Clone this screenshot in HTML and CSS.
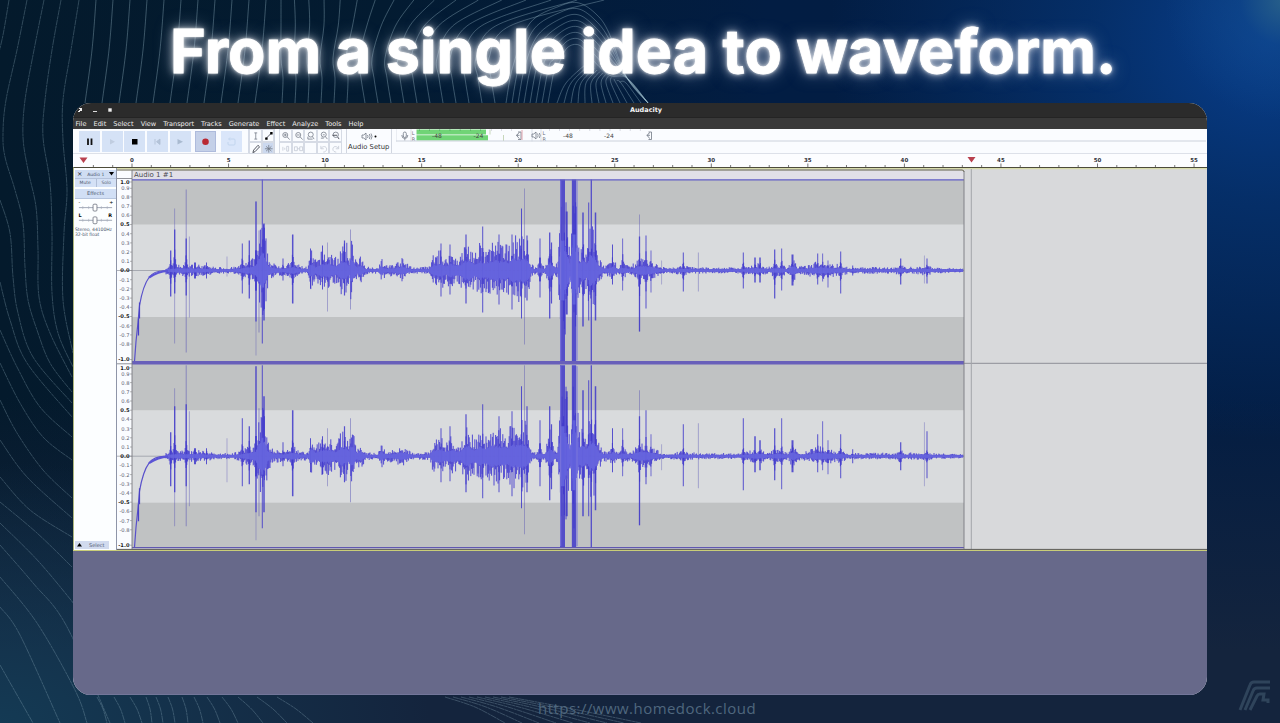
FILE: index.html
```html
<!DOCTYPE html>
<html lang="en">
<head>
<meta charset="utf-8">
<title>Audacity</title>
<link rel="stylesheet" href="styles.css">
</head>
<body>
<svg class="contours" viewBox="0 0 1280 723" id="contours" aria-hidden="true"></svg>
<main class="page">
  <h1 class="headline">From a single idea to waveform.</h1>
  <section class="window">
    <div class="titlebar">
      <div class="controls"><span class="close"></span><span class="min"></span><span class="max"></span></div>
      <span class="app">Audacity</span>
    </div>
    <nav class="menu"><span>File</span><span>Edit</span><span>Select</span><span>View</span><span>Transport</span><span>Tracks</span><span>Generate</span><span>Effect</span><span>Analyze</span><span>Tools</span><span>Help</span></nav>
    <div class="toolbar">
      <div class="transport">
        <div class="btn"><svg viewBox="0 0 21 21"><path d="M9 7.500v6.500M12.500 7.500v6.500" stroke="#111" stroke-width="1.800"/></svg></div>
        <div class="btn"><svg viewBox="0 0 21 21"><path d="M8 8l5 2.700-5 2.800z" fill="#c0cde0"/></svg></div>
        <div class="btn"><svg viewBox="0 0 21 21"><path d="M8 8h5.500v5.500H8z"/></svg></div>
        <div class="btn"><svg viewBox="0 0 21 21"><path d="M8 8v5.500M13 8l-3.500 2.700 3.500 2.800z" fill="#b4c4d9" stroke="#afbed3" stroke-width=".8"/></svg></div>
        <div class="btn"><svg viewBox="0 0 21 21"><path d="M7.500 8l5.500 2.700-5.500 2.800z" fill="#a9bad0"/></svg></div>
        <div class="btn rec"><svg viewBox="0 0 21 21"><circle cx="10.500" cy="10.800" r="3.300" fill="#b92832"/></svg></div>
        <div class="btn loop"><svg viewBox="0 0 21 21"><path d="M8 8h5q1 0 1 1v4q0 1-1 1H8M9 6.500L7.500 8 9 9.500M7 11v2q0 1 1 1" fill="none" stroke="#bdd0eb" stroke-width=".8"/></svg></div>
      </div>
      <div class="tools">
        <i><svg viewBox="0 0 12 12"><path d="M4.500 3h3M4.500 9.500h3M6 3v6.500" class="st"/></svg></i>
        <i><svg viewBox="0 0 12 12"><path d="M3 9l6-6" class="dk"/><path d="M2.300 7.700h2.500v2.500H2.300zM7.500 2.200H10v2.500H7.500z"/></svg></i>
        <i><svg viewBox="0 0 12 12"><path d="M3 10l.8-2.600 4.500-5L10 4 5.300 9z" class="dk"/></svg></i>
        <i class="on"><svg viewBox="0 0 12 12"><path d="M6 2v8M2 6h8M3.200 3.500l5.600 5M8.800 3.500l-5.600 5" class="st"/></svg></i>
      </div>
      <div class="zooms">
        <i><svg viewBox="0 0 12 12"><circle cx="5.500" cy="5.200" r="2.600" class="st"/><path d="M7.500 7.200L10 10M4 5.200h3M5.500 3.700v3" class="st"/></svg></i>
        <i><svg viewBox="0 0 12 12"><circle cx="5.500" cy="5.200" r="2.600" class="st"/><path d="M7.500 7.200L10 10M4 5.200h3" class="st"/></svg></i>
        <i><svg viewBox="0 0 12 12"><circle cx="6" cy="4.800" r="2.600" class="st"/><path d="M7.800 7l1.700 2.500M3 7v2.500h5" class="st"/></svg></i>
        <i><svg viewBox="0 0 12 12"><circle cx="6" cy="4.800" r="2.600" class="st"/><path d="M7.800 7l2 2.500M3 8.500h3M5 5h2" class="st"/></svg></i>
        <i><svg viewBox="0 0 12 12"><circle cx="6" cy="5" r="2.800" class="st"/><path d="M8 7.200l1.500 2.300M2.500 5.500h5" class="dk"/></svg></i>
        <i><svg viewBox="0 0 12 12"><path d="M3 4v4M5 5v2M7 3.500h2v5H7z" class="lt"/></svg></i>
        <i><svg viewBox="0 0 12 12"><path d="M1.500 4h3v4h-3zM7 4h3v4H7zM4.500 6H7" class="lt"/></svg></i>
        <i class="blank"></i>
        <i><svg viewBox="0 0 12 12"><path d="M3 3v3h3M3.200 5.500C5 3 9 3 9 6.500c0 2-2 3-3.500 3" class="lt"/></svg></i>
        <i><svg viewBox="0 0 12 12"><path d="M9 3v3H6M8.800 5.500C7 3 3 3 3 6.500c0 2 2 3 3.500 3" class="lt"/></svg></i>
      </div>
      <div class="setup"><svg viewBox="0 0 16 9"><path d="M1 3h1.800L5 1v7L2.800 6H1zM6.500 3q1 1.500 0 3M8.300 2q1.600 2.500 0 5M10 1.500q2 3 0 6" class="st"/><circle cx="14.500" cy="4.500" r="1" /></svg><span>Audio Setup</span></div>
      <div class="meters">
        <svg viewBox="0 0 810 12.500" width="810" height="12.500">
          <path d="M0 0V12.500M15 0v12.500M136 0v12.500M145 0v12.500" stroke="#d9dee7"/>
          <rect x="7.300" y="3" width="3" height="5.500" rx="1.500" class="st"/><path d="M5.800 6q0 3.500 3 3.500t3-3.500M8.800 9.500v2" class="st"/>
          <text x="15.700" y="5.800" class="lr">L</text><text x="15.700" y="11.600" class="lr">R</text>
          <path d="M20.500 .5h69.500v5h-69.500zM20.500 6.300h71.500v5.200h-71.500z" fill="#70d476"/>
          <path d="M23 1h66" stroke="#3f8350" stroke-dasharray=".7 9.500"/>
          <path d="M94 .5v5M107.500 6v6" stroke="#c7d7bb"/>
          <text x="36" y="8.600" class="db">-48</text><text x="77.500" y="8.600" class="db">-24</text>
          <path d="M95 1h24M153 1h95" stroke="#aab" stroke-dasharray=".8 9.300"/>
          <path d="M123.500 3.500q-5 2.800 0 6M120 6.300h3.500M122 3h3v7.500h-3" class="st"/><path d="M126 1v10" stroke="#dfa3ad"/>
          <path d="M136 5h1.800l2.200-2v7l-2.200-2H136zM141.600 4.500q1 2 0 4M143.400 4q1.500 2.500 0 5" class="st"/>
          <text x="146.500" y="5.800" class="lr">L</text><text x="146.500" y="11.600" class="lr">R</text>
          <text x="167" y="8.600" class="db">-48</text><text x="208" y="8.600" class="db">-24</text>
          <path d="M254 3.500q-5 2.800 0 6M250.500 6.300h3.500M252.500 3h3v7.500h-3" class="st"/>
          <path d="M0 12h810" stroke="#ccd2dc"/>
        </svg>
      </div>
    </div>
    <svg class="ruler" id="ruler" viewBox="73 154 1134 13" width="1134" height="13"></svg>
    <div class="project">
      <aside class="panel">
        <div class="name"><b>×</b><span>Audio 1</span><svg viewBox="0 0 6 4"><path d="M0 0h6L3 4z"/></svg></div>
        <div class="pair"><span>Mute</span><span>Solo</span></div>
        <div class="fx">Effects</div>
        <svg class="sliders" viewBox="0 0 42 27"><path d="M4 8.500h34M4 21.500h34" stroke="#8991a4" stroke-width=".8"/><path d="M8 7v3M14 7v3M27 7v3M33 7v3M8 20v3M14 20v3M27 20v3M33 20v3" stroke="#a4abb8" stroke-width=".6"/><rect x="18.500" y="5" width="4" height="7" rx="1" fill="#fff" stroke="#686e7a" stroke-width=".8"/><rect x="18.500" y="18" width="4" height="7" rx="1" fill="#fff" stroke="#686e7a" stroke-width=".8"/><text x="3.500" y="5">-</text><text x="35" y="5">+</text><text x="3.500" y="18" font-weight="bold">L</text><text x="34" y="18" font-weight="bold">R</text></svg>
        <p>Stereo, 44100Hz<br>32-bit float</p>
        <div class="select"><svg viewBox="0 0 6 4"><path d="M0 4h6L3 0z"/></svg><span>Select</span></div>
      </aside>
      <svg class="wave" id="wave" viewBox="117 168 1090 382" width="1090" height="382"></svg>
    </div>
    <div class="empty"></div>
  </section>
  <footer class="url">https://www.homedock.cloud</footer>
</main>
<svg class="brand" viewBox="0 0 34 32"><path d="M2 30L12 5q1-3 4-3h16M7 30l8-19q1-3 4-3h13M12 30l7-14q1-2 3-2h4l-1 6h5v3" fill="none" stroke="#2f445b" stroke-width="3"/></svg>
<script src="app.js"></script>
</body>
</html>
```
FILE: styles.css
```css
* { box-sizing: border-box; }
body {
  margin: 0;
  width: 1280px;
  height: 723px;
  overflow: hidden;
  position: relative;
  font-family: "DejaVu Sans", sans-serif;
  background:
    radial-gradient(circle at 1285px 0, #28608a 0, rgba(20, 77, 142, .45) 45px, transparent 120px),
    radial-gradient(ellipse 440px 400px at 1270px 40px, #083e8c 0, rgba(6, 54, 120, .7) 40%, transparent 100%),
    radial-gradient(ellipse 430px 260px at 0 723px, #143a54 0, transparent 100%),
    linear-gradient(180deg, transparent 55%, #14243d 90%),
    linear-gradient(90deg, #041a2c 0, #031b31 30%, #021d43 60%, #031d43 100%);
}
.contours { position: absolute; inset: 0; width: 1280px; height: 723px; }
.contours path { fill: none; stroke: #9cbdcb; stroke-width: .8; opacity: .36; }
.contours .dots path { stroke-dasharray: 6 .5 3 .4; }
.contours .bright path { opacity: .46; }
.page { position: relative; height: 723px; display: flex; flex-direction: column; }
.headline {
  margin: 0;
  height: 103px;
  flex: none;
  padding-left: 170px;
  font: 700 61px/102px Inter, sans-serif;
  letter-spacing: .05px;
  white-space: nowrap;
  color: #fff;
  -webkit-text-stroke: .8px #fff;
  text-shadow: 0 0 3px #fff, 0 0 8px rgba(255, 255, 255, .75), 0 0 18px rgba(220, 230, 255, .5);
}
.window { width: 1134px; height: 592px; margin-left: 73px; flex: none; display: flex; flex-direction: column; border-radius: 18px; overflow: hidden; background: #fafcff; }
.titlebar { height: 15px; flex: none; background: #2b2b2b; color: #f4f4f4; display: grid; grid-template-columns: 80px 1fr 68px; align-items: center; border-bottom: 1px solid #242424; }
.controls { display: flex; align-items: center; gap: 11px; padding-left: 5px; }
.controls span { width: 4px; height: 4px; }
.close { background: linear-gradient(135deg, transparent 40%, #eee 42% 65%, transparent 67%), linear-gradient(45deg, transparent 50%, #eee 51%); }
.min { border-bottom: 1px solid #ddd; }
.max { background: #eee; transform: scale(.85); }
.app { text-align: center; font-size: 6.500px; font-weight: 700; line-height: 13px; }
.menu { height: 11px; flex: none; display: flex; gap: 7.100px; padding-left: 2.500px; background: #393939; color: #ededed; font-size: 6.550px; line-height: 12px; white-space: nowrap; }
.toolbar { height: 25px; flex: none; display: flex; border-bottom: 1px solid #dde1e9; background: #fafcff; }
.transport { display: flex; gap: 1.700px; padding: 2px 2px 2px 6px; width: 176px; border-right: 1px solid #d4dae6; }
.btn { width: 21px; height: 21px; background: #d5e2f6; flex: none; }
.btn svg { display: block; width: 21px; height: 21px; }
.rec { margin-left: 3px; background: #c4d0e8; border: 1px solid #aebbdc; }
.rec svg { margin: -1px; }
.loop { margin-left: 3px; background: #dae6fa; }
.tools, .zooms { display: grid; grid-template-rows: 12.500px 12.500px; height: 25px; }
.tools { grid-template-columns: 12.500px 12.500px; border-right: 1px solid #cfd5e1; }
.zooms { grid-template-columns: repeat(5, 12.500px); margin-left: 4px; }
.tools i, .zooms i { border: .5px solid #d6dbe5; height: 12.500px; }
.tools svg, .zooms svg { display: block; width: 11.500px; height: 11.500px; }
.tools .on { background: #ccd9ef; }
.st { fill: none; stroke: #707784; stroke-width: .8; }
.dk { fill: none; stroke: #3b3f49; stroke-width: .9; }
.lt { fill: none; stroke: #c1c7d3; stroke-width: .8; }
.setup { margin-left: 4px; width: 46.500px; display: flex; flex-direction: column; align-items: center; border: 1px solid #d1d6e0; border-width: 0 1px; font-size: 6.800px; line-height: 9px; color: #333; white-space: nowrap; }
.setup svg { width: 16px; height: 9px; margin: 3px 0 2px; }
.meters { padding: 0 0 0 3.500px; height: 13px; }
.meters svg { display: block; }
.lr { font-size: 5px; fill: #6b717b; }
.db { font-size: 6px; fill: #444; }
.ruler { display: block; flex: none; background: #fcfdff; }
.ruler text { font-size: 5.500px; font-weight: 700; text-anchor: middle; fill: #30323a; }
.project { display: flex; height: 383px; flex: none; border-left: 1px solid #aeb77e; border-top: 1px solid #4c4b3a; }
.panel { width: 43px; padding: 2px 0 1px 1px; border-right: 1px solid #8e95a8; background: #fcfeff; display: flex; flex-direction: column; color: #4e596e; font-size: 4.500px; }
.name { height: 8px; display: flex; align-items: center; justify-content: space-between; padding: 0 2px; background: #cfddf3; color: #48536a; }
.name b { font-size: 6.500px; line-height: 8px; color: #222; font-weight: 400; }
.name svg, .select svg { width: 5px; height: 3.500px; }
.pair { height: 9px; display: grid; grid-template-columns: 1fr 1fr; text-align: center; line-height: 8px; background: #d4e1f6; border-top: .5px solid #b5c3dc; }
.pair span + span { border-left: 1px solid #b1bfd8; }
.fx { margin-top: 1.500px; height: 10px; background: #d1dff5; line-height: 9.500px; text-align: center; border-bottom: 1px solid #b6c5de; font-size: 5px; }
.sliders { display: block; width: 41px; height: 27px; margin-top: 0; }
.sliders text { font-size: 5px; }
.panel p { margin: 0; line-height: 5.600px; font-size: 4.600px; white-space: nowrap; letter-spacing: -.1px; padding-top: 1px; }
.select { margin-top: auto; display: flex; align-items: center; gap: 7px; width: 34px; height: 8px; padding-left: 2px; background: #d1daee; font-size: 5px; }
.wave { display: block; width: 1090px; height: 382px; }
.wave text { font-size: 5.200px; text-anchor: end; fill: #5a6070; }
.wave .major { font-weight: 700; fill: #222; }
.wave .clip { font-size: 7px; text-anchor: start; fill: #4b4b51; }
.empty { flex: 1; background: #67698a; border-top: 1px solid #c9cd78; border-bottom: 1px solid #73769a; }
.url { height: 28px; padding: 1px 0 0 538px; font: 400 15px/25px "Open Sans", sans-serif; color: #4f677e; letter-spacing: .46px; }
.brand { position: absolute; left: 1238px; top: 680px; width: 34px; height: 32px; }
```
FILE: app.js
```js
// Small seeded generator, so the drawing is stable between loads.
let seed = 7;
const rnd = () => { seed = (seed * 16807) % 2147483647; return seed / 2147483647; };

// ---- background contour lines ----
const curve = pts => {
  let d = `M${pts[0]}`;
  for (let i = 0; i < pts.length - 1; i++) {
    const a = pts[i - 1] || pts[i], b = pts[i], c = pts[i + 1], e = pts[i + 2] || c;
    d += `C${b[0] + (c[0] - a[0]) / 6} ${b[1] + (c[1] - a[1]) / 6} ${c[0] - (e[0] - b[0]) / 6} ${c[1] - (e[1] - b[1]) / 6} ${c[0]} ${c[1]}`;
  }
  return `<path d="${d}"/>`;
};
const left = [
  [[9,0],[3,35],[-3,60]],
  [[27,0],[17,50],[6,100],[3,133],[5,157],[15,190],[23,223],[25,267],[28,300],[37,330],[50,363],[72,392]],
  [[44,0],[34,50],[25,100],[23,137],[28,170],[36,207],[38,250],[39,297],[50,333],[72,377]],
  [[61,0],[52,50],[45,100],[43,137],[50,183],[52,233],[52,293],[58,333],[73,367]],
  [[79,0],[71,50],[63,100],[63,140],[67,190],[64,233],[63,300],[73,353]],
  [[0,200],[10,233],[13,277],[18,313],[33,357],[72,403]],
  [[0,282],[10,320],[27,363],[72,417]],
  [[0,330],[17,367],[40,407],[72,437]],
  [[0,363],[20,403],[43,437],[72,460]],
  [[0,400],[17,433],[43,470],[72,498]],
  [[0,440],[27,477],[72,518]],
  [[0,477],[30,510],[72,537]],
  [[0,502],[37,533],[72,567]],
  [[0,523],[40,563],[83,615]],
  [[0,545],[33,583],[66,625],[110,723]],
  [[0,577],[37,623],[75,690],[87,723]],
  [[0,607],[20,635],[60,723]],
  [[0,665],[33,723]]
];
let lines = left.map(curve).join("");
[[97,107],[114,125],[130,142],[146,152],[156,163],[168,175],[182,188],[194,203],[207,220],[222,238],[238,263],[257,287],[277,313]].forEach(p => {
  lines += curve([[p[0],697],[(p[0] + p[1]) / 2 + 1,709],[p[1],723]]);
});
for (let i = 0; i < 9; i++) lines += curve([[445 + i * 8,697],[475 + i * 11,707],[505 + i * 17,723]]);
let bright = "";
for (let i = 0; i < 11; i++) { const x = 96 + i * 17; bright += curve([[x,0],[x - 4,50],[x - 11,103]]); }
for (let i = 0; i < 17; i++) {
  const x = 281 + i * 13;
  bright += curve([[x + i * i * .45,0],[x + i * 1.300,26],[x,58],[x + 2,78],[x + (i > 5 ? 6 : 1),103]]);
}
for (let i = 0; i < 8; i++) {
  const y = 3 + i * 6;
  bright += curve([[506 + i * 6,103],[513 + i * 6,66],[530 + i * 4,y + 20],[560 + i,y + 3],[579,y],[597 - i,y + 12],[609,y + 30],[627,78],[648,103]]);
}
for (let i = 0; i < 13; i++) bright += curve([[557 + i * 7,103],[566 + i * 5,83],[586 + i * 2.800,64 + i * 1.500]]);
document.getElementById("contours").innerHTML = `<g class="dots">${lines}</g><g class="bright">${bright}</g>`;

// ---- timeline ruler ----
const second = 19.31, origin = 132;
let r = "";
for (let s = -2; s <= 55; s++) {
  const x = origin + s * second;
  r += `<path d="M${x} ${s % 5 ? 165 : 163.500}V167" stroke="#777"/>`;
  if (s >= 0 && s % 5 === 0) r += `<text x="${x}" y="162.300">${s}</text>`;
}
r += `<path d="M79.500 157.500h8l-4 5.500zM967.500 157h8l-4 5.500z" fill="#b9414e"/>`;
document.getElementById("ruler").innerHTML = r;

// ---- waveform ----
// Noise floor: x, half height.
const floor = [[165,4],[180,6],[200,6],[215,3.500],[230,3],[240,5],[250,10],[256,15],[259,36],[263,54],[265,40],[268,15],[273,7],[285,5],[293,10],[300,5],[308,4],[311,20],[316,10],[322,19],[330,19],[337,12],[341,25],[347,26],[349,12],[351,33],[354,24],[357,8],[360,14],[366,4],[378,3],[381,13],[386,5],[395,7],[402,12],[408,6],[413,3],[430,4],[433,16],[441,20],[446,12],[450,19],[460,14],[466,29],[470,27],[475,17],[480,27],[485,20],[492,30],[500,27],[508,25],[513,33],[518,33],[524,36],[528,28],[531,7],[536,3],[540,8],[545,4],[550,25],[554,7],[558,9],[561,70],[566,65],[570,18],[573,75],[577,60],[579,22],[583,32],[587,20],[590,44],[595,40],[598,14],[604,5],[610,7],[613,12],[618,4],[623,8],[630,4],[637,10],[641,13],[648,12],[653,9],[660,4],[668,2.500],[683,5],[690,4],[705,3],[740,3],[755,7],[761,7],[768,3],[775,7],[783,6],[788,3],[793,13],[798,4],[808,5],[818,10],[825,9],[835,6],[841,7],[848,3],[870,3.500],[895,3],[901,7],[905,3],[927,5],[935,3],[963,2]];
// Peaks: x, up, down, width, up/down in the lower channel, faint flag.
const peaks = [
  [170.700,20,26,1.300,24,30],[174.700,41,23,1.300,50,36],[174.700,62,73,.8,68,70,1],[186.200,32,25,1.300,52,30],[186.200,81,82,1,91,70,1],[189.300,34,47,.8,45,50,1],[195,8,8,2,8,8],[206.500,8,8,1,8,8],[227,14,6,.7,18,26,1],
  [242.300,27,23,1,38,30],[249.300,30,28,1.300,30,28],[256,69,51,1.300,90,56],[256,69,85,.7,90,84,1],[259,40,62,1,48,60,1],[262.300,91,73,1,91,72],[264,47,50,1.500,60,56],[283,12,10,1,14,10],[292.700,36,33,1.500,46,40],
  [310.500,22,18,1,18,16],[322.500,25,19,1,20,18],[327.500,28,41,.8,28,30,1],[344.500,30,25,1.200,30,26],[350.500,41,39,.9,38,46,1],
  [441,27,26,1,28,26],[450,26,24,1,30,25],[466,36,33,1.200,42,36],[482.700,44,42,1,52,42],[499,36,34,1,40,36],[512,36,39,1,45,40],[521.500,62,48,1,70,52],[524.500,82,74,.8,91,78,1],[527,35,30,1.200,50,36],
  [540,32,27,1,36,30],[549.700,38,48,1.300,50,44],[551.500,28,33,1.200,32,33],[562.500,91,91,5,91,91],[566.700,59,44,2,65,60],[574,91,91,4.300,91,91],[583,58,56,1.500,66,60],[588.700,68,50,1,76,60],[591.300,91,91,1.300,91,91],[595.500,58,50,1.500,70,54],
  [612.500,26,14,1,28,16],[622.700,32,20,.8,28,20],[639.500,34,61,1.300,40,69],[639.500,56,61,.8,66,69,1],[646,35,38,1,46,28],[651,20,22,.8,22,20],[661.700,10,14,.7,12,14,1],[683.300,18,21,1,32,30],[698.300,18,21,.8,33,32,1],
  [743.300,18,18,1,38,34],[755,13,12,1.500,20,16],[760,13,12,1.500,16,14],[774.700,21,28,1.200,28,24],[781.700,22,20,.9,38,33],[792.500,16,15,2,16,16],[817.700,17,14,1,22,16],[822.700,17,11,.8,35,14],[828,10,17,.8,16,18],[840.700,19,23,1,22,22],[852.700,5,5,1,7,7],[900.700,12,14,1.200,14,14],[924.300,15,13,.7,34,30,1],[927,12,13,1,25,22]
];
const level = x => {
  for (let i = 1; i < floor.length; i++) if (x <= floor[i][0]) {
    const [a, m] = floor[i - 1], [b, n] = floor[i];
    return m + (n - m) * (x - a) / (b - a);
  }
  return 2;
};
// Height added beside a peak, so that it widens towards its foot.
const skirt = (x, side) => peaks.reduce((m, p) => p[6] ? m : Math.max(m, Math.min(p[side], 50) * .55 * Math.exp(-Math.abs(x - p[0]) / 1.300)), 0);
const bars = (cy, lower) => {
  let peak = "", rms = "", spike = "", faint = "";
  for (let x = 166; x < 963; x += .8) {
    const h = level(x);
    const u = Math.max(h * (.32 + .75 * Math.pow(rnd(), 1.500)), skirt(x, 1), 1.300);
    const d = Math.max(h * (.3 + .72 * Math.pow(rnd(), 1.500)), skirt(x, 2), 1.300);
    peak += `M${x.toFixed(1)} ${(cy - u).toFixed(1)}V${(cy + d).toFixed(1)}`;
    const m = Math.max(.9, h * (.27 + .1 * rnd()));
    rms += `M${x.toFixed(1)} ${(cy - m).toFixed(1)}V${(cy + m).toFixed(1)}`;
  }
  peaks.forEach(([x, u, d, w, u2, d2, f]) => {
    if (lower) { u = u2; d = d2; }
    const b = `M${x - w / 2} ${cy - u}h${w}V${cy + d}h${-w}z`;
    if (f) faint += b; else spike += b;
  });
  return `<path d="${faint}" fill="#5550b5" opacity=".52"/><path d="${peak}" stroke="#433bd0" stroke-width=".9"/>
    <path d="${spike}" fill="#4038ca" opacity=".85"/><path d="${rms}" stroke="#6766df" stroke-width="1"/>
    <path d="M561 ${cy - 30}h3.500V${cy + 30}H561zM572.500 ${cy - 36}h3V${cy + 34}h-3z" fill="#6060dc"/>
    <path d="M560.700 ${cy - 90}V${cy + 90}M577 ${cy - 90}V${cy + 90}" stroke="#7a76da"/>
    <path d="M134.500 ${cy + 91}L136 ${cy + 71}L138 ${cy + 52}L139.500 ${cy + 35}Q143 ${cy + 15} 149 ${cy + 7}T168 ${cy + .5}" fill="none" stroke="#5951cb" stroke-width="1.200"/>
    <path d="M138.500 ${cy + 65}V${cy + 48}M139.500 ${cy + 48}V${cy + 32}" stroke="#4941c4" stroke-width="1.200"/>
    <path d="M149 ${cy + 7}Q158 ${cy + 1} 168 ${cy + .5}" fill="none" stroke="#5b54d6" stroke-width="2.200"/>`;
};
const channel = (top, cy, lower) => {
  let s = `<rect x="132" y="${top}" width="832" height="183" fill="#c0c2c3"/><rect x="132" y="${cy - 46}" width="832" height="92.500" fill="#d9dbdd"/>
    <path d="M117 ${cy}h847" stroke="#8f949d" stroke-width=".7"/>`;
  for (let i = 10; i >= -10; i--) {
    if (i === -9) continue;
    let y = cy - i * 9.200;
    if (i === 10) y = cy - 88.500;
    if (i === 9) y = cy - 82.200;
    if (i === -10) y = cy + 89;
    s += `<text x="129.500" y="${y + 1.900}"${i % 5 ? "" : ' class="major"'}>${(i / 10).toFixed(1)}</text><path d="M130 ${y}h2" stroke="#888" stroke-width=".6"/>`;
  }
  return s + bars(cy, lower);
};
document.getElementById("wave").innerHTML = `
  <rect x="117" y="168" width="1090" height="382" fill="#d8d9db"/>
  <rect x="117" y="168" width="15" height="382" fill="#fafcff"/>
  <rect x="132" y="170" width="832" height="9" fill="#e1e0e7"/>
  <text x="134" y="177.300" class="clip">Audio 1 #1</text>
  ${channel(180, 270.500, false)}${channel(364, 456.200, true)}
  <path d="M117 168.600h1090" stroke="#d8dcac" stroke-width="1.200"/><path d="M117 170h845q2 0 2 2" fill="none" stroke="#64634c"/>
  <path d="M132 179.800h832" stroke="#625ec7" stroke-width="1.300"/>
  <path d="M132 362.700h832" stroke="#685fba" stroke-width="3.400"/><path d="M132 547.700h832" stroke="#6058b0" stroke-width="1.300"/>
  <path d="M964 363.300h243M117 363.800h15M117 178.500h15" stroke="#85878e" stroke-width=".9"/>
  <path d="M132 170V549M964 171V549" stroke="#787880" stroke-width=".9"/>
  <path d="M971.300 169V549" stroke="#a3a4a9"/>
  <path d="M117 549.400h1090" stroke="#5b5a53"/>`;
```
